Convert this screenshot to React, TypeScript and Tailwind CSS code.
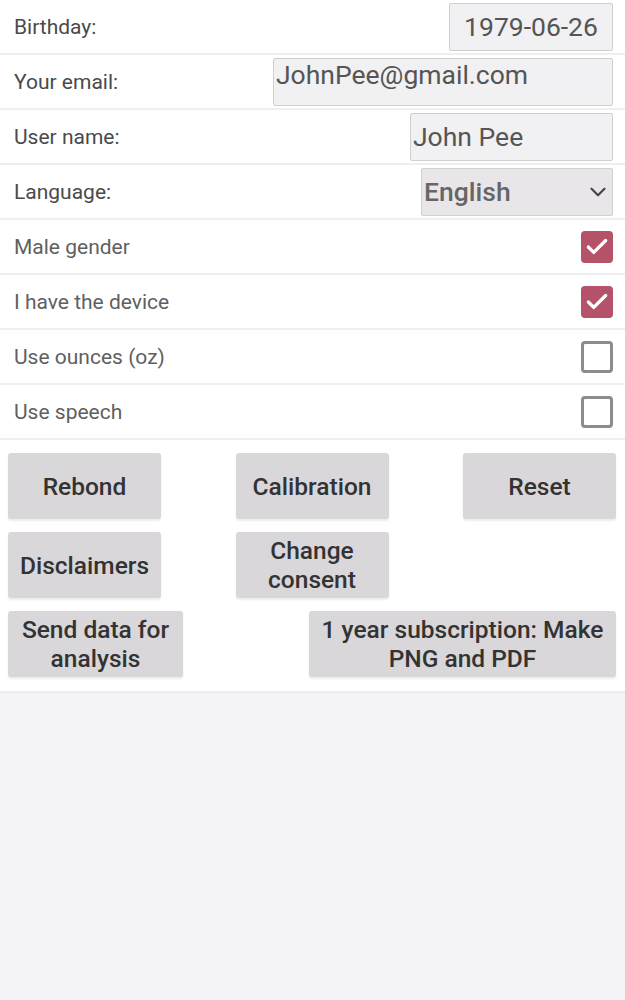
import { Check, ChevronDown } from "lucide-react";

type CheckRow = { label: string; checked: boolean };

const checks: CheckRow[] = [
  { label: "Male gender", checked: true },
  { label: "I have the device", checked: true },
  { label: "Use ounces (oz)", checked: false },
  { label: "Use speech", checked: false },
];

function Row({ label, children, dark }: { label: string; children: React.ReactNode; dark?: boolean }) {
  return (
    <div className="flex h-[55px] items-center justify-between border-b-2 border-[#efefef] pl-[14px] pr-[12px]">
      <span className={`pt-[2px] text-[21px] ${dark ? "text-[#4a4a4a]" : "text-[#5f5f5f]"}`}>{label}</span>
      {children}
    </div>
  );
}

function Btn({ children, className }: { children: React.ReactNode; className: string }) {
  return (
    <button
      className={`flex h-[66px] flex-col items-center justify-center rounded-[3px] bg-[#d9d7da] text-[24.5px] font-medium leading-[29px] text-[#333333] shadow-[0_2px_2px_rgba(0,0,0,0.08)] ${className}`}
    >
      {children}
    </button>
  );
}

export default function App() {
  return (
    <div className="flex min-h-[1000px] flex-col bg-[#f4f3f5] font-['Roboto',sans-serif]">
      <div className="bg-white">
        <Row label="Birthday:" dark>
          <div className="flex h-[48px] w-[164px] items-center justify-center rounded-[2px] border border-[#cfcfcf] bg-[#f1f0f2] text-[26.5px] text-[#555555]">
            1979-06-26
          </div>
        </Row>
        <Row label="Your email:" dark>
          <div className="h-[48px] w-[340px] rounded-[2px] border border-[#cfcfcf] bg-[#f1f0f2] pl-[2px] pt-[1px] text-[26.5px] leading-[30px] text-[#555555]">
            JohnPee@gmail.com
          </div>
        </Row>
        <Row label="User name:" dark>
          <div className="flex h-[48px] w-[203px] items-center rounded-[2px] border border-[#cfcfcf] bg-[#f1f0f2] pl-[2px] text-[26.5px] text-[#555555]">
            John Pee
          </div>
        </Row>
        <Row label="Language:" dark>
          <div className="flex h-[48px] w-[192px] items-center justify-between rounded-[2px] border border-[#cfcfcf] bg-[#e8e6e9] pl-[2px] pr-[1px] text-[26.5px] font-medium text-[#666666]">
            <span>English</span>
            <ChevronDown size={26} strokeWidth={2} className="text-[#444444]" />
          </div>
        </Row>
        {checks.map((c) => (
          <Row key={c.label} label={c.label}>
            {c.checked ? (
              <div className="flex h-[32px] w-[32px] items-center justify-center rounded-[4px] bg-[#b5526a]">
                <Check size={26} strokeWidth={3} className="text-white" />
              </div>
            ) : (
              <div className="h-[32px] w-[32px] rounded-[4px] border-[3px] border-[#8c8c8c]" />
            )}
          </Row>
        ))}
        <div className="flex flex-col gap-[13px] border-b-2 border-[#ebeaec] pb-[14px] pl-[8px] pr-[9px] pt-[13px]">
          <div className="flex justify-between">
            <Btn className="w-[153px]">Rebond</Btn>
            <Btn className="w-[153px]">Calibration</Btn>
            <Btn className="w-[153px]">Reset</Btn>
          </div>
          <div className="flex justify-between">
            <Btn className="w-[153px]">Disclaimers</Btn>
            <Btn className="w-[153px]">
              <span>Change</span>
              <span>consent</span>
            </Btn>
            <div className="w-[153px]" />
          </div>
          <div className="flex justify-between">
            <Btn className="w-[175px]">
              <span>Send data for</span>
              <span>analysis</span>
            </Btn>
            <Btn className="w-[307px]">
              <span>1 year subscription: Make</span>
              <span>PNG and PDF</span>
            </Btn>
          </div>
        </div>
      </div>
    </div>
  );
}
